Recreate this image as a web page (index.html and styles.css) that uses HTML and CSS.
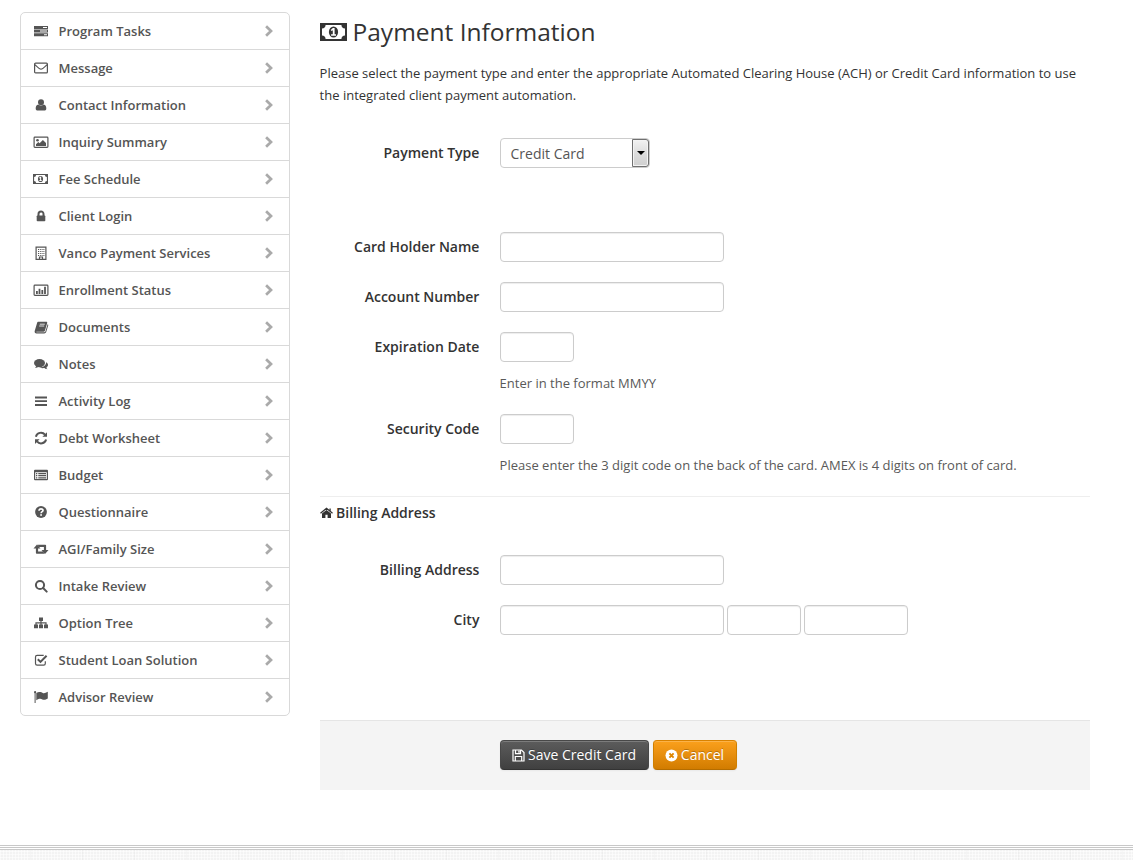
FILE: index.html
```html
<!DOCTYPE html>
<html lang="en">
<head>
<meta charset="utf-8">
<title>Payment Information</title>
<link rel="stylesheet" href="styles.css">
</head>
<body>
<svg class="defs" width="0" height="0" aria-hidden="true">
  <symbol id="i-tasks" viewBox="0 0 16 14"><path fill-rule="evenodd" d="M1 2h14v3H1zM10 3h4v1h-4zM1 5.6h14v3H1zM7 6.6h7v1H7zM1 9.2h14v3H1zM11 10.2h3v1h-3z"/></symbol>
  <symbol id="i-mail" viewBox="0 0 16 14"><rect x="1.6" y="2.1" width="12.8" height="9.8" rx="1" class="line"/><path d="M2 3.7c2 1.8 4.500 4.500 6 4.500s4-2.700 6-4.500" class="line"/></symbol>
  <symbol id="i-user" viewBox="0 0 16 14"><circle cx="8" cy="4.300" r="3"/><path d="M5.300 6.400c1.500 1.500 3.900 1.500 5.400 0 1.800.2 2.600 2 2.600 4.100 0 1.500-.8 2.100-2 2.100H4.700c-1.200 0-2-.6-2-2.100 0-2.100.8-3.900 2.600-4.100z"/></symbol>
  <symbol id="i-image" viewBox="0 0 16 14"><rect x="1.100" y="2.100" width="13.800" height="10.300" rx=".8" class="line"/><circle cx="4.500" cy="5.200" r="1.300"/><path d="M3 10.900V9.300l2.300-2.200 1.300 1.200 3.300-3.400L13 8v2.900z"/></symbol>
  <symbol id="i-money" viewBox="0 0 27 18"><path fill-rule="evenodd" d="M0 0h27v18H0zM5.600 2A3.800 3.800 0 0 1 2 5.600v6.800A3.800 3.800 0 0 1 5.600 16h15.800a3.800 3.800 0 0 1 3.600-3.600V5.600A3.800 3.800 0 0 1 21.400 2z"/><ellipse cx="13.500" cy="9" rx="4.600" ry="5.600"/><path class="cut" d="M12.900 5h1.700v6.300H16v1.400h-4.900v-1.400h1.700V7.300l-1.200.8-.9-1z"/></symbol>
  <symbol id="i-lock" viewBox="0 0 16 14"><path d="M5.500 7V4.900a2.500 2.500 0 0 1 5 0V7" class="thick"/><rect x="3.700" y="6.500" width="8.600" height="5.800" rx=".8"/></symbol>
  <symbol id="i-building" viewBox="0 0 16 14"><path d="M3.100 1.100h9.800v12.300H3.100z" class="line"/><path class="dots" d="M5 3.500h6.500M5 5.500h6.500M5 7.500h6.500M5 9.500h6.500"/><path d="M6.500 11h3v2.500h-3z" class="line"/></symbol>
  <symbol id="i-chart" viewBox="0 0 16 14"><rect x="1.100" y="2.100" width="13.800" height="10.300" rx=".8" class="line"/><path d="M3 8h1.800v3H3zM5.600 5.800h1.800V11H5.600zM8.400 7h1.800v4H8.400zM11.100 3.800h1.800V11h-1.800z"/></symbol>
  <symbol id="i-book" viewBox="0 0 16 14"><path d="M5.500 1.800h7.700c1 0 1.200.6 1 1.300l-2.300 7.600c-.2.700-.7 1-1.400 1H3.800c-.7 0-.7.600.2.600h7.300c.6 0 .9-.2 1.100-.8l2.200-7.300c.7.300.8.700.6 1.300l-2 6.600c-.3.900-1 1.300-1.900 1.300H3.500C2.200 13.400 1.300 12.200 1.700 11L4 3.200c.3-.9.700-1.400 1.500-1.400z"/><path class="cutline" d="M6.800 4.200h5M6.200 6h5"/></symbol>
  <symbol id="i-comments" viewBox="0 0 16 14"><ellipse cx="6.500" cy="6.100" rx="5.500" ry="4.200"/><path d="M3.200 8.500c0 1-.5 1.800-1.200 2.400 1.800-.1 2.900-.7 3.700-1.500z"/><path d="M13.100 5.200c2.700 1.500 2.400 4 .3 5.200.1.800.6 1.400 1.200 1.900-1.400 0-2.400-.4-3.200-1.200-1.900.4-3.700 0-4.900-.9 4 .1 6.700-2 6.600-5z"/></symbol>
  <symbol id="i-bars" viewBox="0 0 16 14"><path d="M2 2.500h12v1.900H2zM2 6.200h12v1.900H2zM2 10h12v1.900H2z"/></symbol>
  <symbol id="i-refresh" viewBox="0 0 16 14"><path class="thick" d="M2.900 5.700A5.200 5.200 0 0 1 12 3.700M13.100 8.500A5.200 5.200 0 0 1 4 10.400"/><path d="M14 1.200v4.600H9.400zM2 12.900V8.300h4.600z"/></symbol>
  <symbol id="i-list" viewBox="0 0 16 14"><path fill-rule="evenodd" d="M2 1.700h12q1 0 1 1v8.600q0 1-1 1H2q-1 0-1-1V2.700q0-1 1-1zM2.200 4.300v6.800h11.600V4.300z"/><path d="M3 5h1.300v1.200H3zM5.300 5H13v1.200H5.300zM3 7.100h1.300v1.200H3zM5.300 7.100H13v1.200H5.300zM3 9.200h1.300v1.200H3zM5.300 9.200H13v1.200H5.300z"/></symbol>
  <symbol id="i-question" viewBox="0 0 16 14"><circle cx="8" cy="7" r="5.900"/><path class="cutthick" d="M6 5.700c.1-1.300.9-1.800 2-1.800s2 .6 2 1.600c0 1.200-1.900 1.200-1.900 2.700"/><path class="cut" d="M7.200 9.200h1.800v1.600H7.200z"/></symbol>
  <symbol id="i-retweet" viewBox="0 0 16 14"><path d="M4 2.500l3.500 4H5.100v3h4.700l1.700 2.200H3.700c-.6 0-.8-.3-.8-.9V6.500H.5zM12 11.900L8.500 7.900h2.400v-3H6.200L4.500 2.700h7.800c.6 0 .8.300.8.900v4.300h2.400z"/></symbol>
  <symbol id="i-search" viewBox="0 0 16 14"><circle cx="7" cy="6" r="4.100" class="search"/><path class="search" d="M10.100 9l3.600 3.600"/></symbol>
  <symbol id="i-tree" viewBox="0 0 16 14"><path d="M6 1.500h4v3.600H6zM1 8.600h4v3.600H1zM6 8.600h4v3.600H6zM11 8.600h4v3.600h-4z"/><path d="M8 4.500V9M3 9V6.900h10V9" class="line"/></symbol>
  <symbol id="i-check" viewBox="0 0 16 14"><path class="line" d="M12.300 8.300v2.300q0 1.600-1.600 1.600H4.100q-1.600 0-1.600-1.600V4q0-1.600 1.600-1.600h6.600"/><path class="thick" d="M4.800 6.200l2.700 2.700 6.100-6.200"/></symbol>
  <symbol id="i-flag" viewBox="0 0 16 14"><circle cx="2.100" cy="2.200" r="1.100"/><path d="M1.600 2.200h1v10.800h-1zM3.300 3.100c3.200-2 5-.8 6.400-.2 1.500.6 2.900.1 5.100-1.100v6.800c-2.300 1.300-3.800 1.600-5.500.8-1.500-.8-3.200-.8-6 .8z"/></symbol>
  <symbol id="i-chevron" viewBox="0 0 10 12"><path d="M2.100 1.300L7 6l-4.900 4.700" class="chev"/></symbol>
  <symbol id="i-home" viewBox="0 0 13 12"><path d="M2 6.600l4.500-3.700L11 6.600V11H7.600V7.700H5.400V11H2z"/><path d="M.5 6.200l6-4.900 6 4.900M10.100 1.500v2.800" class="roof"/></symbol>
  <symbol id="i-save" viewBox="0 0 13 13"><path class="line" d="M1 1h8.500L12 3.500V12H1zM3.500 1v3.600h5V1M3.300 12V7.500h6.400V12"/><path d="M6.300 1.500h1.400v2.300H6.300z"/></symbol>
  <symbol id="i-cancel" viewBox="0 0 13 13"><circle cx="6.500" cy="6.500" r="6"/><path class="cross" d="M4.400 4.400l4.200 4.200M8.600 4.400L4.400 8.600"/></symbol>
</svg>

<div class="page">
  <nav class="sidebar">
    <a class="item"><svg class="icon"><use href="#i-tasks"/></svg>Program Tasks<svg class="arrow"><use href="#i-chevron"/></svg></a>
    <a class="item"><svg class="icon"><use href="#i-mail"/></svg>Message<svg class="arrow"><use href="#i-chevron"/></svg></a>
    <a class="item"><svg class="icon"><use href="#i-user"/></svg>Contact Information<svg class="arrow"><use href="#i-chevron"/></svg></a>
    <a class="item"><svg class="icon"><use href="#i-image"/></svg>Inquiry Summary<svg class="arrow"><use href="#i-chevron"/></svg></a>
    <a class="item"><svg class="icon icon-money"><use href="#i-money"/></svg>Fee Schedule<svg class="arrow"><use href="#i-chevron"/></svg></a>
    <a class="item"><svg class="icon"><use href="#i-lock"/></svg>Client Login<svg class="arrow"><use href="#i-chevron"/></svg></a>
    <a class="item"><svg class="icon"><use href="#i-building"/></svg>Vanco Payment Services<svg class="arrow"><use href="#i-chevron"/></svg></a>
    <a class="item"><svg class="icon"><use href="#i-chart"/></svg>Enrollment Status<svg class="arrow"><use href="#i-chevron"/></svg></a>
    <a class="item"><svg class="icon"><use href="#i-book"/></svg>Documents<svg class="arrow"><use href="#i-chevron"/></svg></a>
    <a class="item"><svg class="icon"><use href="#i-comments"/></svg>Notes<svg class="arrow"><use href="#i-chevron"/></svg></a>
    <a class="item"><svg class="icon"><use href="#i-bars"/></svg>Activity Log<svg class="arrow"><use href="#i-chevron"/></svg></a>
    <a class="item"><svg class="icon"><use href="#i-refresh"/></svg>Debt Worksheet<svg class="arrow"><use href="#i-chevron"/></svg></a>
    <a class="item"><svg class="icon"><use href="#i-list"/></svg>Budget<svg class="arrow"><use href="#i-chevron"/></svg></a>
    <a class="item"><svg class="icon"><use href="#i-question"/></svg>Questionnaire<svg class="arrow"><use href="#i-chevron"/></svg></a>
    <a class="item"><svg class="icon"><use href="#i-retweet"/></svg>AGI/Family Size<svg class="arrow"><use href="#i-chevron"/></svg></a>
    <a class="item"><svg class="icon"><use href="#i-search"/></svg>Intake Review<svg class="arrow"><use href="#i-chevron"/></svg></a>
    <a class="item"><svg class="icon"><use href="#i-tree"/></svg>Option Tree<svg class="arrow"><use href="#i-chevron"/></svg></a>
    <a class="item"><svg class="icon"><use href="#i-check"/></svg>Student Loan Solution<svg class="arrow"><use href="#i-chevron"/></svg></a>
    <a class="item"><svg class="icon"><use href="#i-flag"/></svg>Advisor Review<svg class="arrow"><use href="#i-chevron"/></svg></a>
  </nav>

  <main class="content">
    <h1 class="title"><svg class="title-icon"><use href="#i-money"/></svg>Payment Information</h1>
    <p class="intro">Please select the payment type and enter the appropriate Automated Clearing House (ACH) or Credit Card information to use the integrated client payment automation.</p>

    <form>
      <div class="row row-type">
        <label class="label">Payment Type</label>
        <div class="select"><span class="select-value">Credit Card</span><span class="select-button"></span></div>
      </div>
      <div class="row">
        <label class="label" for="holder">Card Holder Name</label>
        <input class="input" id="holder" type="text">
      </div>
      <div class="row">
        <label class="label" for="account">Account Number</label>
        <input class="input" id="account" type="text">
      </div>
      <div class="row row-help">
        <label class="label" for="expires">Expiration Date</label>
        <input class="input input-small" id="expires" type="text">
        <span class="help">Enter in the format MMYY</span>
      </div>
      <div class="row row-help">
        <label class="label" for="code">Security Code</label>
        <input class="input input-small" id="code" type="text">
        <span class="help">Please enter the 3 digit code on the back of the card. AMEX is 4 digits on front of card.</span>
      </div>

      <h2 class="section"><svg class="home"><use href="#i-home"/></svg>Billing Address</h2>
      <div class="row">
        <label class="label" for="address">Billing Address</label>
        <input class="input" id="address" type="text">
      </div>
      <div class="row row-city">
        <label class="label" for="city">City</label>
        <div class="fields">
          <input class="input" id="city" type="text">
          <input class="input input-small" type="text">
          <input class="input input-medium" type="text">
        </div>
      </div>

      <div class="actions">
        <button class="button button-dark" type="button"><svg class="button-icon"><use href="#i-save"/></svg>Save Credit Card</button>
        <button class="button button-orange" type="button"><svg class="button-icon"><use href="#i-cancel"/></svg>Cancel</button>
      </div>
    </form>
  </main>
</div>
<footer class="footer"></footer>
</body>
</html>
```
FILE: styles.css
```css
* { box-sizing: border-box; }

body {
  margin: 0;
  height: 860px;
  overflow: hidden;
  display: flex;
  flex-direction: column;
  background: #fff;
  color: #333;
  font: 13px/22px "Open Sans", sans-serif;
}

.defs { position: absolute; }

.line { fill: none; stroke: currentColor; stroke-width: 1.2; }
.thick { fill: none; stroke: currentColor; stroke-width: 2; }
.dots { fill: none; stroke: currentColor; stroke-width: 1; stroke-dasharray: 1 .8; }
.search { fill: none; stroke: currentColor; stroke-width: 2; stroke-linecap: round; }
.chev { fill: none; stroke: currentColor; stroke-width: 2.7; }
.roof { fill: none; stroke: currentColor; stroke-width: 1.3; }
.cut { fill: #fff; }
.cutline { fill: none; stroke: #fff; stroke-width: .8; }
.cutthick { fill: none; stroke: #fff; stroke-width: 1.6; }
.cross { fill: none; stroke: #e08600; stroke-width: 1.9; }

.page {
  height: 845px;
  flex: none;
  display: flex;
  align-items: flex-start;
  gap: 30px;
  padding: 12px 43px 0 20px;
}

.sidebar {
  width: 270px;
  flex: none;
  border: 1px solid #d9d9d9;
  border-radius: 5px;
}

.item {
  display: flex;
  align-items: center;
  height: 36px;
  padding: 0 15px 0 11.5px;
  color: #555;
  font-weight: 600;
}

.item + .item {
  height: 37px;
  border-top: 1px solid #d9d9d9;
}

.icon {
  width: 16px;
  height: 14px;
  margin-right: 10px;
  fill: currentColor;
}

.icon-money { width: 15px; height: 10px; margin: 0 10.5px 0 .5px; }

.arrow {
  width: 10px;
  height: 12px;
  margin-left: auto;
  color: #aaa;
}

.content { flex: 1; }

.title {
  display: flex;
  align-items: center;
  height: 40px;
  margin: 0 0 10px;
  font-size: 24.5px;
  font-weight: 400;
  line-height: 40px;
}

.title-icon {
  width: 27px;
  height: 18px;
  margin-right: 5.5px;
  fill: currentColor;
}

.intro { margin: 0 0 32px -.4px; }

.row {
  display: grid;
  grid-template-columns: 160px auto;
  justify-content: start;
  column-gap: 20px;
  margin-bottom: 20px;
}

.row-type { margin-bottom: 64px; }
.row-help { margin-bottom: 19px; }
.row-city { margin-bottom: 85px; }

.label {
  padding-right: .6px;
  text-align: right;
  font-size: 14px;
  font-weight: 600;
  line-height: 30px;
}

.input {
  width: 224px;
  height: 30px;
  padding: 4px 6px;
  border: 1px solid #ccc;
  border-radius: 4px;
  background: #fff;
  box-shadow: inset 0 1px 1px rgba(0, 0, 0, .075);
}

.input-small { width: 74px; }
.input-medium { width: 104px; }

.fields { display: flex; gap: 3px; }

.select {
  display: flex;
  width: 150px;
  height: 30px;
  border: 1px solid #ccc;
  border-radius: 4px;
  color: #555;
  font-size: 14px;
  line-height: 29px;
}

.select-value { flex: 1; padding-left: 9.5px; }

.select-button {
  display: flex;
  align-items: center;
  justify-content: center;
  width: 17px;
  height: 28px;
  border: 1px solid #707070;
  border-radius: 0 3px 3px 0;
  background: linear-gradient(#f2f2f2, #ddd 50%, #cfcfcf);
  box-shadow: inset 0 0 0 1px #f3f3f3;
}

.select-button::after {
  content: "";
  border: solid transparent;
  border-width: 4px 4px 0;
  border-top-color: #000;
}

.help {
  grid-column: 2;
  margin: 10px 0 0 -.4px;
  color: #595959;
  line-height: 23px;
}

.section {
  display: flex;
  align-items: center;
  height: 32px;
  margin: 0 0 27px;
  border-top: 1px solid #eee;
  font-size: 14px;
  font-weight: 600;
}

.home {
  width: 13px;
  height: 12px;
  margin-right: 3px;
  fill: currentColor;
}

.actions {
  display: flex;
  gap: 4px;
  height: 70px;
  padding: 19px 20px 0 180px;
  border-top: 1px solid #e5e5e5;
  background: #f4f4f4;
}

.button {
  display: flex;
  align-items: center;
  justify-content: center;
  height: 30px;
  padding: 0 1px 0 0;
  border: 1px solid;
  border-radius: 4px;
  color: #fff;
  font: 14px/20px "Open Sans", sans-serif;
  text-shadow: 0 -1px 0 rgba(0, 0, 0, .25);
  box-shadow: inset 0 1px 0 rgba(255, 255, 255, .2), 0 1px 2px rgba(0, 0, 0, .05);
}

.button-dark {
  width: 149px;
  border-color: #484848 #484848 #333;
  background: linear-gradient(#5c5c5c, #404040);
}

.button-orange {
  width: 84px;
  border-color: #d98200 #d08000 #b56d00;
  background: linear-gradient(#fba01c, #d27c00);
}

.button-icon {
  width: 13px;
  height: 13px;
  margin-right: 3px;
  fill: currentColor;
}

.footer {
  flex: 1;
  background:
    linear-gradient(#c8c8c8 1px, #fff 1px 2px, #c8c8c8 2px 3px, #fff 3px 4px, #c8c8c8 4px 5px, transparent 5px),
    repeating-linear-gradient(90deg, transparent 0 30px, rgba(0, 0, 0, .025) 30px 31px, transparent 31px 52px),
    repeating-linear-gradient(90deg, rgba(255, 255, 255, .55) 0 1px, transparent 1px 3px),
    repeating-linear-gradient(rgba(255, 255, 255, .55) 0 1px, transparent 1px 3px),
    #f3f3f3;
}
```
